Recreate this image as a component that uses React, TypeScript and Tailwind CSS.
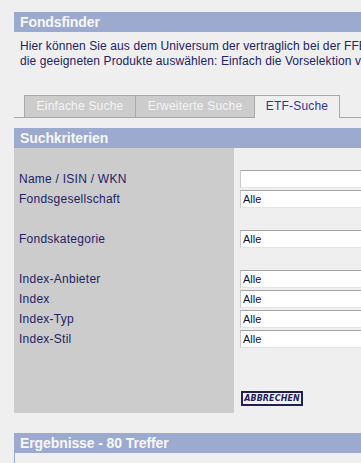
import React from 'react';

const labelRows: (string | null)[] = [
  'Name / ISIN / WKN',
  'Fondsgesellschaft',
  null,
  'Fondskategorie',
  null,
  'Index-Anbieter',
  'Index',
  'Index-Typ',
  'Index-Stil',
];

const SectionHeader = ({ title }: { title: string }) => (
  <div className="h-5 bg-[#9daacf] pl-[6px] text-[14px] font-bold leading-5 tracking-[-0.1px] text-[#f7f8fc]">
    {title}
  </div>
);

const Tab = ({ label, active, first, width }: { label: string; active?: boolean; first?: boolean; width: string }) => (
  <div
    className={
      (active
        ? '-ml-px relative z-10 h-[23px] bg-[#efefef] text-[#333399]'
        : first
          ? 'h-[22px] bg-[#cccccc] text-[#f4f4f4]'
          : '-ml-px h-[22px] bg-[#cccccc] text-[#f4f4f4]') +
      ' border border-b-0 border-[#a8a8a8] text-center text-[12px] leading-[21px] tracking-[0.2px] ' +
      width
    }
  >
    {label}
  </div>
);

const App = () => {
  return (
    <div className="h-[463px] w-[361px] overflow-hidden bg-[#efefef] font-['Liberation_Sans',Arial,sans-serif]">
      <div className="ml-[14px] w-[700px] pt-[12px]">
        <SectionHeader title="Fondsfinder" />

        <p className="mt-[7px] whitespace-nowrap pl-[6px] text-[12px] leading-[15px] tracking-[0.1px] text-[#222266]">
          Hier können Sie aus dem Universum der vertraglich bei der FFB verfügbaren Fonds
          <br />
          die geeigneten Produkte auswählen: Einfach die Vorselektion vornehmen und suchen.
        </p>

        {/* Reiter */}
        <div className="mt-[26px] flex items-end border-b border-[#a8a8a8] pl-[10px]">
          <Tab label="Einfache Suche" first width="w-[112px]" />
          <Tab label="Erweiterte Suche" width="w-[120px]" />
          <div className="-mb-px">
            <Tab label="ETF-Suche" active width="w-[86px]" />
          </div>
        </div>

        <div className="mt-[10px]">
          <SectionHeader title="Suchkriterien" />
          <div className="flex">
            <div className="w-[220px] bg-[#cccccc] pt-[21px] pl-[5px]">
              {labelRows.map((l, i) => (
                <div key={i} className="h-5 text-[12px] leading-5 tracking-[0.25px] text-[#222266]">
                  {l}
                </div>
              ))}
            </div>
            <div className="flex-1 pt-[21px] pl-[6px] pb-[7px]">
              {labelRows.map((l, i) =>
                l === null ? (
                  <div key={i} className="h-5" />
                ) : (
                  <div key={i} className="h-5 pt-px">
                    <div className="h-[18px] w-[300px] border border-t-[#a4a4a4] border-l-[#c8c8c8] border-r-[#c8c8c8] border-b-[#e4e4e4] bg-white pl-[2px] text-[11px] leading-[16px] text-[#111133]">
                      {i === 0 ? '' : 'Alle'}
                    </div>
                  </div>
                ),
              )}
              <button className="mt-[42px] ml-px flex h-[15px] w-[62px] items-center justify-center border-2 border-[#1f1f5f] bg-[#f4f4f4] font-['DejaVu_Sans',Verdana,sans-serif] text-[8px] font-bold italic leading-none tracking-[0.1px] text-[#1f1f5f]">
                ABBRECHEN
              </button>
            </div>
          </div>
        </div>

        <div className="mt-[20px]">
          <SectionHeader title="Ergebnisse - 80 Treffer" />
          <div className="h-[40px] border-l border-[#9daacf]" />
        </div>
      </div>
    </div>
  );
};

export default App;
